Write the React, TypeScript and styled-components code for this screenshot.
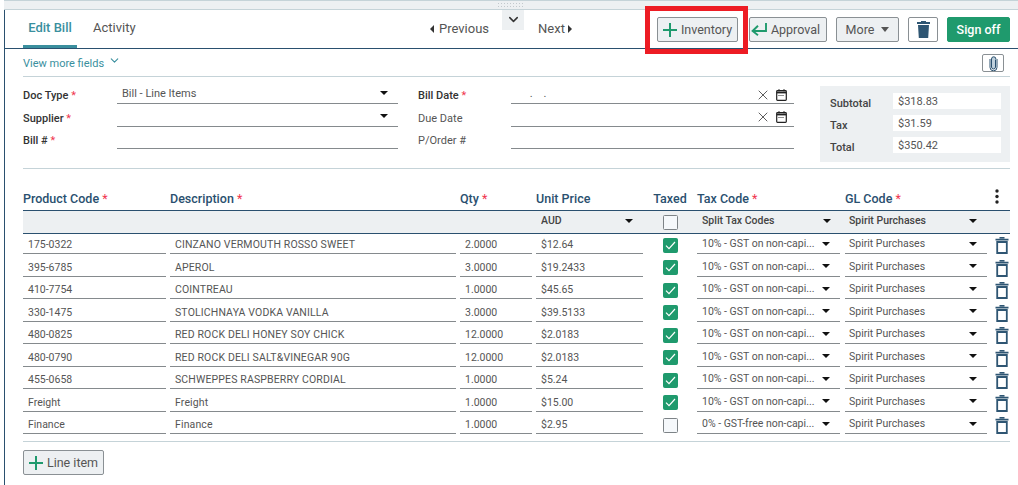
import React from "react";
import styled, { createGlobalStyle } from "styled-components";
import { ChevronDown, X } from "lucide-react";

const Global = createGlobalStyle`
  html, body { margin: 0; padding: 0; background: #fff; overflow: hidden; }
  body { font-family: Roboto, "Liberation Sans", sans-serif; color: #555; }
  * { box-sizing: border-box; }
`;

const Page = styled.div`
  width: 1018px;
  height: 485px;
  overflow: hidden;
  padding-left: 4px;
`;
const Frame = styled.div`
  height: 485px;
  border-left: 1px solid #2a506f;
  display: flex;
  flex-direction: column;
`;
const TopBar = styled.div`
  height: 10px;
  margin-left: -1px;
  background: #edf0f2;
  border-top: 1px solid #c5d3d8;
  border-bottom: 1px solid #c5d3d8;
  display: flex;
  justify-content: center;
  align-items: center;
  padding-right: 2px;
`;
const Grip = styled.div`
  width: 28px;
  height: 6px;
  margin-left: 2px;
  background-image: radial-gradient(#c3c9cd 0.8px, transparent 0.9px);
  background-size: 3px 3px;
`;
const Header = styled.header`
  height: 39px;
  border-bottom: 1px solid #2a506f;
  display: flex;
  align-items: stretch;
  padding-left: 18px;
`;
const Tab = styled.div<{ $active?: boolean }>`
  width: ${(p) => (p.$active ? 54 : 62)}px;
  margin-right: ${(p) => (p.$active ? 16 : 0)}px;
  padding-top: 10px;
  text-align: ${(p) => (p.$active ? "center" : "left")};
  font-size: 13px;
  line-height: 16px;
  font-weight: ${(p) => (p.$active ? 500 : 400)};
  color: ${(p) => (p.$active ? "#3a8f9e" : "#555")};
  border-bottom: ${(p) => (p.$active ? "3px solid #3a8f9e" : "none")};
  height: 38px;
`;
const Pager = styled.div`
  display: flex;
  align-items: flex-start;
  margin-left: 275px;
  font-size: 13px;
  color: #555;
`;
const PageLink = styled.div<{ $gap: number }>`
  display: flex;
  align-items: center;
  gap: ${(p) => p.$gap}px;
  padding-top: 11px;
  line-height: 16px;
`;
const Caret = styled.span<{ $dir: "l" | "r" }>`
  width: 0;
  height: 0;
  border-top: 4px solid transparent;
  border-bottom: 4px solid transparent;
  ${(p) => (p.$dir === "l" ? "border-right: 4px solid #333;" : "border-left: 4px solid #333;")}
`;
const Collapse = styled.div`
  width: 22px;
  height: 20px;
  margin: 0 14px 0 13px;
  padding-top: 2px;
  background: #edf0f2;
  color: #333;
  display: flex;
  justify-content: center;
  align-items: flex-start;
`;
const Actions = styled.div`
  margin-left: auto;
  display: flex;
  align-items: flex-start;
  padding-top: 7px;
  padding-right: 8px;
  font-size: 12.5px;
`;
const Highlight = styled.div`
  position: relative;
  margin-right: 11px;
`;
const RedBox = styled.div`
  position: absolute;
  left: -12px;
  right: -10px;
  top: -11px;
  height: 48px;
  border: 5px solid #ed1c24;
  pointer-events: none;
`;
const Btn = styled.div<{ $w: number; $mr?: number }>`
  width: ${(p) => p.$w}px;
  height: 25px;
  margin-right: ${(p) => p.$mr ?? 0}px;
  background: #edf0f2;
  border: 1px solid #8a9094;
  border-radius: 2px;
  display: flex;
  align-items: center;
  justify-content: center;
  color: #555;
  font-size: 12.5px;
  white-space: nowrap;
`;
const ApprovalBtn = styled(Btn)`
  padding-right: 5px;
`;
const IconBtn = styled(Btn)`
  background: #fff;
  color: #2a506f;
`;
const Green = styled(Btn)`
  background: #1f9a6d;
  border-color: #1f9a6d;
  color: #fff;
  font-weight: 500;
`;
const MoreCaret = styled.span`
  width: 0;
  height: 0;
  margin-left: 7px;
  border-left: 4.5px solid transparent;
  border-right: 4.5px solid transparent;
  border-top: 5px solid #555;
`;
const MoreRow = styled.div`
  height: 28px;
  margin: 0 8px 0 18px;
  border-bottom: 1px solid #c5d3d8;
  display: flex;
  align-items: flex-start;
  justify-content: space-between;
  padding: 5px 6px 0 0;
  color: #3a8f9e;
  font-size: 11px;
`;
const MoreLink = styled.div`
  display: flex;
  align-items: flex-start;
  gap: 4px;
  line-height: 16px;
  padding-top: 2px;
  & > svg {
    margin-top: -2px;
  }
`;
const Attach = styled.div`
  width: 22px;
  height: 18px;
  background: #fff;
  border: 1px solid #8a9094;
  border-radius: 2px;
  display: flex;
  align-items: center;
  justify-content: center;
`;
const FormArea = styled.div`
  height: 92px;
  margin: 0 8px 0 18px;
  border-bottom: 1px solid #c5d3d8;
  display: flex;
  align-items: flex-start;
`;
const FormCol = styled.div<{ $w: number; $labelW: number; $fieldW: number }>`
  width: ${(p) => p.$w}px;
  display: grid;
  grid-template-columns: ${(p) => p.$labelW}px ${(p) => p.$fieldW}px;
  grid-auto-rows: 22.4px;
  padding-top: 5px;
`;
const FormLabel = styled.div<{ $strong?: boolean }>`
  font-size: 11px;
  font-weight: ${(p) => (p.$strong ? 500 : 400)};
  color: ${(p) => (p.$strong ? "#333" : "#555")};
  line-height: 14px;
  padding-top: 7.4px;
  white-space: nowrap;
`;
const Req = styled.span`
  color: #f0364f;
  font-weight: 400;
`;
const Field = styled.div`
  height: 22.4px;
  border-bottom: 1px solid #858a8d;
  display: flex;
  align-items: center;
  padding: 1px 5px 0 5px;
  font-size: 11px;
  color: #555;
`;
const Fill = styled.span`
  flex: 1;
  min-width: 0;
  overflow: hidden;
  white-space: nowrap;
  text-overflow: ellipsis;
`;
const DropCaret = styled.span`
  flex: none;
  width: 0;
  height: 0;
  margin: 0 5px 0 4px;
  border-left: 4.5px solid transparent;
  border-right: 4.5px solid transparent;
  border-top: 4.5px solid #111;
`;
const DateIcons = styled.span`
  display: flex;
  align-items: center;
  gap: 5px;
  color: #333;
  margin: 3px 2px 0 0;
`;
const Totals = styled.div`
  width: 190px;
  height: 76px;
  margin: 9px 0 0 auto;
  background: #edf0f2;
  padding: 7px 9px 0 10px;
  display: grid;
  grid-template-columns: 63px 1fr;
  grid-auto-rows: 22px;
`;
const TotalLabel = styled.div`
  font-size: 11px;
  font-weight: 500;
  color: #444;
  padding-top: 4px;
  line-height: 14px;
`;
const TotalValue = styled.div`
  height: 16px;
  background: #fff;
  font-size: 11px;
  line-height: 18px;
  padding-left: 5px;
  color: #555;
  overflow: hidden;
`;
const Table = styled.div`
  margin: 11px 8px 0 18px;
`;
const Cols = "143px 286px 72px 107px 46px 144px 142px 23px";
const HeadRow = styled.div`
  display: grid;
  grid-template-columns: ${Cols};
  column-gap: 4px;
  height: 31px;
  border-bottom: 1px solid #2a506f;
`;
const HeadCell = styled.div<{ $center?: boolean }>`
  font-size: 12.5px;
  font-weight: 500;
  color: #2a506f;
  line-height: 16px;
  padding-top: 11px;
  white-space: nowrap;
  ${(p) => (p.$center ? "text-align: center;" : "")}
`;
const Kebab = styled.div`
  display: flex;
  justify-content: flex-start;
  padding: 9px 0 0 4px;
  color: #222;
`;
const FilterRow = styled.div`
  display: grid;
  grid-template-columns: ${Cols};
  column-gap: 4px;
  height: 23px;
  background: #edf0f2;
  border-bottom: 1px solid #2a506f;
  align-items: center;
`;
const FilterCell = styled.div<{ $pl?: number }>`
  display: flex;
  align-items: center;
  padding: 0 5px 3px ${(p) => p.$pl ?? 5}px;
  font-size: 10.5px;
  font-weight: 500;
  color: #444;
`;
const Rows = styled.div`
  border-bottom: 1px solid #c5d3d8;
  height: 208px;
  padding-top: 0.25px;
`;
const Row = styled.div`
  display: grid;
  grid-template-columns: ${Cols};
  column-gap: 4px;
  height: 22.5px;
`;
const Cell = styled.div`
  border-bottom: 1px solid #858a8d;
  display: flex;
  align-items: center;
  padding: 2px 5px 0 5px;
  font-size: 10.5px;
  color: #555;
  height: 20px;
  white-space: nowrap;
`;
const DescCell = styled(Cell)`
  letter-spacing: 0.14px;
`;
const SelectCell = styled(Cell)<{ $pl?: number; $mr?: number }>`
  padding: 0 5px 0 ${(p) => p.$pl ?? 5}px;
  margin-right: ${(p) => p.$mr ?? 0}px;
`;
const CheckSlot = styled.div`
  display: flex;
  align-items: center;
  justify-content: center;
  height: 22px;
`;
const TrashSlot = styled.div`
  display: flex;
  justify-content: center;
  padding: 3px 0 0 0;
  width: 19px;
  margin-left: 1px;
`;
const Check = styled.span<{ $on?: boolean }>`
  width: 15px;
  height: 15px;
  border-radius: 1.5px;
  background: ${(p) => (p.$on ? "#1f9a6d" : "#f5f8fb")};
  border: 1px solid ${(p) => (p.$on ? "#1f9a6d" : "#7d8387")};
  display: flex;
  align-items: center;
  justify-content: center;
`;
const AddBtn = styled(Btn)`
  margin-top: 8px;
  margin-left: 18px;
`;
const BtnLabel = styled.span`
  margin-left: 4px;
`;

const PlusIcon = () => (
  <svg width="14" height="14" viewBox="0 0 14 14" fill="none">
    <path d="M7 0v14M0 7h14" stroke="#1f9a6d" strokeWidth="2" />
  </svg>
);
const ReturnIcon = () => (
  <svg width="16" height="13" viewBox="0 0 16 13" fill="none">
    <path d="M15 0v8H2" stroke="#1f9a6d" strokeWidth="1.9" />
    <path d="M7 2.8 1.6 8 7 12.2" stroke="#1f9a6d" strokeWidth="1.9" />
  </svg>
);
const ClipIcon = () => (
  <svg width="9" height="15" viewBox="0 0 9 15" fill="none">
    <path
      d="M6.5 3.5v7.5a2 2 0 0 1-4 0V3a2.2 2.2 0 0 1 4.4 0"
      stroke="#2a506f"
      strokeWidth="1"
      fill="#bfd0dc"
    />
    <path d="M8 3v8.3a3.5 3.5 0 0 1-7 0V3" stroke="#2a506f" strokeWidth="1" />
  </svg>
);
const OutlineTrash = () => (
  <svg width="14" height="17" viewBox="0 0 14 17" fill="none">
    <path d="M4.5 0.7h5M0.5 2.6h13" stroke="#2f5673" strokeWidth="1.6" />
    <path d="M2.2 5H11.8V16H2.2Z" stroke="#2f5673" strokeWidth="1.8" />
  </svg>
);
const SolidTrash = () => (
  <svg width="13" height="17" viewBox="0 0 13 17">
    <path d="M4 0h5v1h4v2H0V1h4Z" fill="#2f5673" />
    <path d="M1 4h11l-.8 13H1.8Z" fill="#2f5673" />
  </svg>
);
const Calendar = () => (
  <svg width="11" height="12" viewBox="0 0 11 12" fill="none">
    <rect x="0.7" y="1.7" width="9.6" height="9.6" rx="0.8" stroke="#222" strokeWidth="1.2" />
    <path d="M0.7 3.5h9.6" stroke="#222" strokeWidth="1.8" />
    <path d="M3 0.2v2M8 0.2v2" stroke="#222" strokeWidth="1.2" />
    <path d="M2.5 6.5h6" stroke="#222" strokeWidth="1.2" strokeDasharray="1 1" />
  </svg>
);
const Tick = () => (
  <svg width="11" height="9" viewBox="0 0 11 9" fill="none">
    <path d="M1 4.6 4 7.6 10 1" stroke="#fff" strokeWidth="1.2" />
  </svg>
);
const Dots = () => (
  <svg width="4" height="15" viewBox="0 0 4 15">
    <circle cx="2" cy="2" r="1.7" fill="#222" />
    <circle cx="2" cy="7.5" r="1.7" fill="#222" />
    <circle cx="2" cy="13" r="1.7" fill="#222" />
  </svg>
);

const TAX10 = "10% - GST on non-capi...";
const items = [
  ["175-0322", "CINZANO VERMOUTH ROSSO SWEET", "2.0000", "$12.64", true, TAX10],
  ["395-6785", "APEROL", "3.0000", "$19.2433", true, TAX10],
  ["410-7754", "COINTREAU", "1.0000", "$45.65", true, TAX10],
  ["330-1475", "STOLICHNAYA VODKA VANILLA", "3.0000", "$39.5133", true, TAX10],
  ["480-0825", "RED ROCK DELI HONEY SOY CHICK", "12.0000", "$2.0183", true, TAX10],
  ["480-0790", "RED ROCK DELI SALT&VINEGAR 90G", "12.0000", "$2.0183", true, TAX10],
  ["455-0658", "SCHWEPPES RASPBERRY CORDIAL", "1.0000", "$5.24", true, TAX10],
  ["Freight", "Freight", "1.0000", "$15.00", true, TAX10],
  ["Finance", "Finance", "1.0000", "$2.95", false, "0% - GST-free non-capi..."],
] as const;

export default function App() {
  return (
    <Page>
      <Global />
      <Frame>
        <TopBar>
          <Grip />
        </TopBar>
        <Header>
          <Tab $active>Edit Bill</Tab>
          <Tab>Activity</Tab>
          <Pager>
            <PageLink $gap={5}>
              <Caret $dir="l" />
              Previous
            </PageLink>
            <Collapse>
              <ChevronDown size={15} strokeWidth={2.4} />
            </Collapse>
            <PageLink $gap={3}>
              Next
              <Caret $dir="r" />
            </PageLink>
          </Pager>
          <Actions>
            <Highlight>
              <Btn $w={81}>
                <PlusIcon />
                <BtnLabel>Inventory</BtnLabel>
              </Btn>
              <RedBox />
            </Highlight>
            <ApprovalBtn $w={78} $mr={9}>
              <ReturnIcon />
              <BtnLabel>Approval</BtnLabel>
            </ApprovalBtn>
            <Btn $w={63} $mr={9}>
              More
              <MoreCaret />
            </Btn>
            <IconBtn $w={30} $mr={9}>
              <SolidTrash />
            </IconBtn>
            <Green $w={63}>Sign off</Green>
          </Actions>
        </Header>
        <MoreRow>
          <MoreLink>
            View more fields
            <ChevronDown size={13} strokeWidth={2} />
          </MoreLink>
          <Attach>
            <ClipIcon />
          </Attach>
        </MoreRow>
        <FormArea>
          <FormCol $w={395} $labelW={94} $fieldW={281}>
            <FormLabel $strong>
              Doc Type <Req>*</Req>
            </FormLabel>
            <Field>
              <Fill>Bill - Line Items</Fill>
              <DropCaret />
            </Field>
            <FormLabel $strong>
              Supplier <Req>*</Req>
            </FormLabel>
            <Field>
              <Fill />
              <DropCaret />
            </Field>
            <FormLabel $strong>
              Bill # <Req>*</Req>
            </FormLabel>
            <Field />
          </FormCol>
          <FormCol $w={376} $labelW={93} $fieldW={283}>
            <FormLabel $strong>
              Bill Date <Req>*</Req>
            </FormLabel>
            <Field>
              <Fill>&nbsp;&nbsp;&nbsp;&nbsp;&nbsp;.&nbsp;&nbsp;&nbsp;&nbsp;.</Fill>
              <DateIcons>
                <X size={16} strokeWidth={1.2} />
                <Calendar />
              </DateIcons>
            </Field>
            <FormLabel>Due Date</FormLabel>
            <Field>
              <Fill />
              <DateIcons>
                <X size={16} strokeWidth={1.2} />
                <Calendar />
              </DateIcons>
            </Field>
            <FormLabel>P/Order #</FormLabel>
            <Field />
          </FormCol>
          <Totals>
            <TotalLabel>Subtotal</TotalLabel>
            <TotalValue>$318.83</TotalValue>
            <TotalLabel>Tax</TotalLabel>
            <TotalValue>$31.59</TotalValue>
            <TotalLabel>Total</TotalLabel>
            <TotalValue>$350.42</TotalValue>
          </Totals>
        </FormArea>
        <Table>
          <HeadRow>
            <HeadCell>
              Product Code <Req>*</Req>
            </HeadCell>
            <HeadCell>
              Description <Req>*</Req>
            </HeadCell>
            <HeadCell>
              Qty <Req>*</Req>
            </HeadCell>
            <HeadCell>Unit Price</HeadCell>
            <HeadCell $center>Taxed</HeadCell>
            <HeadCell>
              Tax Code <Req>*</Req>
            </HeadCell>
            <HeadCell>
              GL Code <Req>*</Req>
            </HeadCell>
            <Kebab>
              <Dots />
            </Kebab>
          </HeadRow>
          <FilterRow>
            <span />
            <span />
            <span />
            <FilterCell>
              <Fill>AUD</Fill>
              <DropCaret />
            </FilterCell>
            <CheckSlot>
              <Check />
            </CheckSlot>
            <FilterCell>
              <Fill>Split Tax Codes</Fill>
              <DropCaret />
            </FilterCell>
            <FilterCell $pl={4}>
              <Fill>Spirit Purchases</Fill>
              <DropCaret />
            </FilterCell>
            <span />
          </FilterRow>
          <Rows>
            {items.map(([code, desc, qty, price, taxed, tax]) => (
              <Row key={code + desc}>
                <Cell>{code}</Cell>
                <DescCell>{desc}</DescCell>
                <Cell>{qty}</Cell>
                <Cell>{price}</Cell>
                <CheckSlot>
                  <Check $on={taxed}>{taxed && <Tick />}</Check>
                </CheckSlot>
                <SelectCell $mr={1}>
                  <Fill>{tax}</Fill>
                  <DropCaret />
                </SelectCell>
                <SelectCell $pl={4}>
                  <Fill>Spirit Purchases</Fill>
                  <DropCaret />
                </SelectCell>
                <TrashSlot>
                  <OutlineTrash />
                </TrashSlot>
              </Row>
            ))}
          </Rows>
        </Table>
        <AddBtn $w={81}>
          <PlusIcon />
          <BtnLabel>Line item</BtnLabel>
        </AddBtn>
      </Frame>
    </Page>
  );
}
